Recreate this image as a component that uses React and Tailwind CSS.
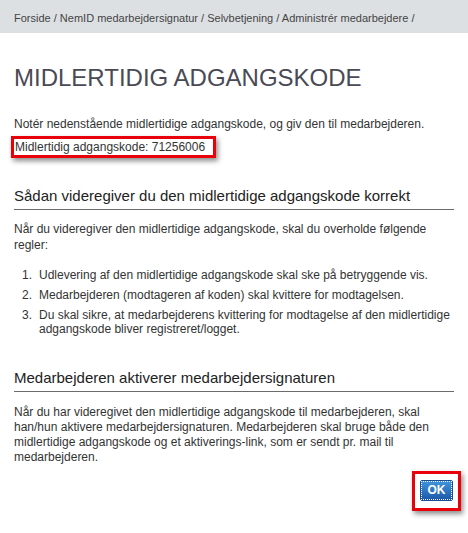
export default function App() {
  return (
    <div className="min-h-screen bg-white text-[#333] font-['Liberation_Sans',Arial,sans-serif]">
      {/* breadcrumb */}
      <div className="bg-[#dde0e3] h-[33px] flex items-center pt-[4px] px-[14px] text-[11px] text-[#444]">
        Forside / NemID medarbejdersignatur / Selvbetjening / Administrér medarbejdere /
      </div>

      <div className="px-[14px]">
        <h1 className="mt-[31px] text-[24px] leading-[28px] text-[#4a4a55]">
          MIDLERTIDIG ADGANGSKODE
        </h1>

        <p className="mt-[24px] text-[12px] leading-[16px]">
          Notér nedenstående midlertidige adgangskode, og giv den til medarbejderen.
        </p>
        <div className="-ml-[3px] mt-[4px] inline-block border-[3px] border-[#e8000b] shadow-[2px_3px_5px_rgba(0,0,0,0.45)] pl-[1px] pr-[8px] text-[12px] leading-[16px]">
          Midlertidig adgangskode: 71256006
        </div>

        <h2 className="mt-[29px] text-[15px] leading-[18px] pb-[4px] border-b border-[#6b6b6b] text-[#222]">
          Sådan videregiver du den midlertidige adgangskode korrekt
        </h2>
        <p className="mt-[11px] text-[12px] leading-[16px]">
          Når du videregiver den midlertidige adgangskode, skal du overholde følgende regler:
        </p>
        <ol className="mt-[15px] text-[12px] leading-[14px] flex flex-col gap-[6px]">
          <li className="flex">
            <span className="w-[25px] pl-[8px] shrink-0">1.</span>
            <span>Udlevering af den midlertidige adgangskode skal ske på betryggende vis.</span>
          </li>
          <li className="flex">
            <span className="w-[25px] pl-[8px] shrink-0">2.</span>
            <span>Medarbejderen (modtageren af koden) skal kvittere for modtagelsen.</span>
          </li>
          <li className="flex">
            <span className="w-[25px] pl-[8px] shrink-0">3.</span>
            <span className="whitespace-nowrap">
              Du skal sikre, at medarbejderens kvittering for modtagelse af den midlertidige
              <br />
              adgangskode bliver registreret/logget.
            </span>
          </li>
        </ol>

        <h2 className="mt-[33px] text-[15px] leading-[18px] pb-[4px] border-b border-[#6b6b6b] text-[#222]">
          Medarbejderen aktiverer medarbejdersignaturen
        </h2>
        <p className="mt-[13px] text-[12px] leading-[15px]">
          Når du har videregivet den midlertidige adgangskode til medarbejderen, skal
          <br />
          han/hun aktivere medarbejdersignaturen. Medarbejderen skal bruge både den
          <br />
          midlertidige adgangskode og et aktiverings-link, som er sendt pr. mail til
          <br />
          medarbejderen.
        </p>

        <div className="flex justify-end mt-[6px]">
          <div className="border-[3px] border-[#e8000b] shadow-[2px_3px_5px_rgba(0,0,0,0.45)] pt-[6px] pb-[7px] px-[5px] -mr-[7px]">
            <button className="block h-[21px] w-[33px] rounded-[2px] border border-[#1a4f95] bg-gradient-to-b from-[#3f95de] to-[#1d58a8] text-white font-bold text-[12px] leading-[19px] outline outline-1 outline-dotted outline-white -outline-offset-[2px]">
              OK
            </button>
          </div>
        </div>
      </div>
    </div>
  );
}
